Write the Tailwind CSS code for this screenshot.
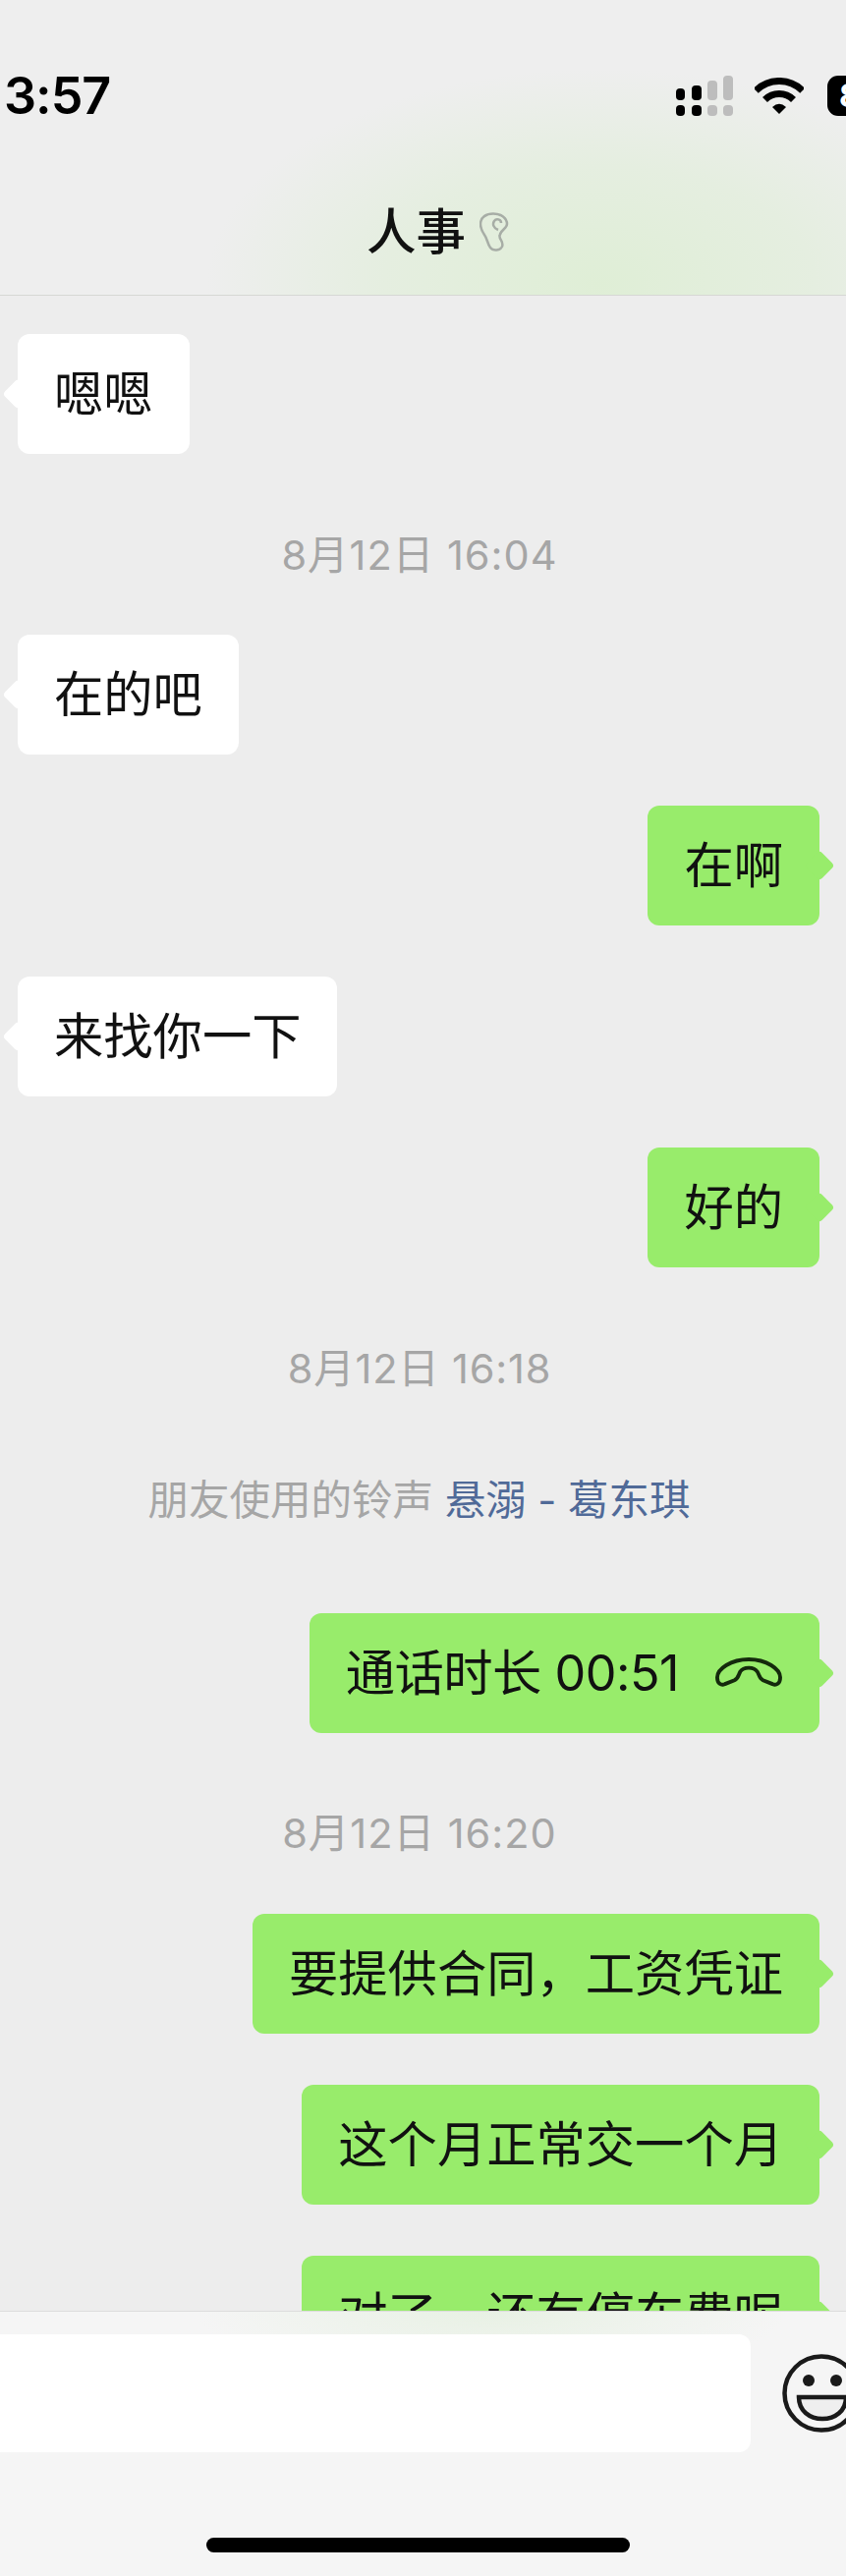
<!DOCTYPE html>
<html lang="zh-CN">
<head>
    <meta charset="UTF-8">
    <meta name="viewport" content="width=device-width, initial-scale=1.0">
    <title>人事</title>
    <script src="https://cdn.jsdelivr.net/npm/@tailwindcss/browser@4"></script>
</head>
<body class="bg-[#ededed] text-[#111111] font-['Inter','Noto_Sans_CJK_SC',sans-serif]">
<div class="relative w-[861px] h-[2622px] overflow-hidden flex flex-col">

    <!-- Header -->
    <header class="relative h-[301px] shrink-0 border-b border-[#d6d8d4] bg-[#eeeeee] overflow-hidden">
        <div class="absolute inset-0 bg-[radial-gradient(ellipse_400px_220px_at_610px_290px,#dfeed6_0%,#e5eee0_55%,#eeeeee_100%)]"></div>
        <div class="relative h-[200px] flex items-end">
            <!-- Status bar -->
            <div class="w-full h-[41px] mb-[82px] flex items-center justify-between">
                <span class="pl-[4px] text-[52px] font-semibold tracking-[-1px] text-black leading-none">3:57</span>
                <div class="flex items-center shrink-0 -mr-[30px]">
                    <svg width="58" height="41" viewBox="0 0 58 41" class="mr-[22px]">
                        <g fill="#000">
                            <rect x="0" y="13" width="9" height="12" rx="4"/>
                            <rect x="0" y="30" width="9" height="11" rx="4"/>
                            <rect x="16" y="10" width="10" height="15" rx="4"/>
                            <rect x="16" y="30" width="10" height="11" rx="4"/>
                        </g>
                        <g fill="#bdbdbd">
                            <rect x="32" y="5" width="10" height="20" rx="4"/>
                            <rect x="32" y="30" width="10" height="11" rx="4"/>
                            <rect x="48" y="0" width="10" height="25" rx="4"/>
                            <rect x="48" y="30" width="10" height="11" rx="4"/>
                        </g>
                    </svg>
                    <svg width="50" height="37" viewBox="0 0 50 37" class="mr-[24px]">
                        <g fill="none" stroke="#000" stroke-width="7">
                            <path d="M1.3 13.3A33.5 33.5 0 0 1 48.7 13.3"/>
                            <path d="M10.5 22.5A20.5 20.5 0 0 1 39.5 22.5"/>
                        </g>
                        <path d="M18 30Q25 23.500 32 30L25 37Z" fill="#000"/>
                    </svg>
                    <div class="w-[49px] h-[41px] rounded-[11px] bg-black text-white text-[32px] font-bold leading-[41px] pl-[12px]">80</div>
                </div>
            </div>
        </div>
        <!-- Title -->
        <div class="relative mt-[1px] flex items-center justify-center gap-[14px] pl-[30px]">
            <span class="text-[50.500px] leading-[70px] font-medium">人事</span>
            <svg width="30" height="41" viewBox="0 0 30 41" fill="none" stroke="#a7ada6" stroke-width="2.500">
                <path d="M1 12C1 5 7 1.500 14 1.500C22 1.500 28 6 28 12C28 17 21 18 20.500 24C20 28 25 30 23 35C21 39 14 40 11 36C8 32 8 27 5 23C3 20 1 17 1 12Z"/>
                <path d="M19 18C14 16 13 12 15 9C17 6 22 7 22 11"/>
            </svg>
        </div>
    </header>

    <!-- Chat -->
    <main class="flex-1 min-h-0 overflow-hidden bg-[#ededed] pt-[39px] pl-[18px] pr-[27px] flex flex-col items-start">
        <div class="relative h-[122px] shrink-0 px-[37px] flex items-center rounded-[12px] bg-white text-[50.300px]">
            <i class="absolute -left-[11px] top-[50px] w-[22px] h-[22px] rotate-45 rounded-[4px] bg-white"></i>
            <span class="relative">嗯嗯</span>
        </div>

        <div class="self-stretch h-[60px] shrink-0 mt-[73px] mb-[51px] flex items-center justify-center pl-[2px] text-[41.500px] tracking-[1px] text-[#a6a6a6]">8月12日 16:04</div>

        <div class="relative h-[122px] shrink-0 px-[37px] flex items-center rounded-[12px] bg-white text-[50.300px]">
            <i class="absolute -left-[11px] top-[50px] w-[22px] h-[22px] rotate-45 rounded-[4px] bg-white"></i>
            <span class="relative">在的吧</span>
        </div>

        <div class="relative self-end mt-[52px] h-[122px] shrink-0 px-[37px] flex items-center rounded-[12px] bg-[#98ec6b] text-[50.300px]">
            <i class="absolute -right-[11px] top-[50px] w-[22px] h-[22px] rotate-45 rounded-[4px] bg-[#98ec6b]"></i>
            <span class="relative">在啊</span>
        </div>

        <div class="relative mt-[52px] h-[122px] shrink-0 px-[37px] flex items-center rounded-[12px] bg-white text-[50.300px]">
            <i class="absolute -left-[11px] top-[50px] w-[22px] h-[22px] rotate-45 rounded-[4px] bg-white"></i>
            <span class="relative">来找你一下</span>
        </div>

        <div class="relative self-end mt-[52px] h-[122px] shrink-0 px-[37px] flex items-center rounded-[12px] bg-[#98ec6b] text-[50.300px]">
            <i class="absolute -right-[11px] top-[50px] w-[22px] h-[22px] rotate-45 rounded-[4px] bg-[#98ec6b]"></i>
            <span class="relative">好的</span>
        </div>

        <div class="self-stretch h-[60px] shrink-0 mt-[73px] flex items-center justify-center pl-[2px] text-[41.500px] tracking-[0.800px] text-[#a6a6a6]">8月12日 16:18</div>

        <div class="self-stretch h-[60px] shrink-0 mt-[74px] mb-[85px] flex items-center justify-center pl-[1px] text-[41.500px] text-[#a6a6a6]">
            <span>朋友使用的铃声&nbsp;<span class="text-[#506a98]">悬溺 - 葛东琪</span></span>
        </div>

        <div class="relative self-end h-[122px] shrink-0 pl-[37px] pr-[37px] flex items-center rounded-[12px] bg-[#98ec6b] text-[50.300px]">
            <i class="absolute -right-[11px] top-[50px] w-[22px] h-[22px] rotate-45 rounded-[4px] bg-[#98ec6b]"></i>
            <span class="relative tracking-[-0.500px]">通话时长 00:51</span>
            <svg width="70" height="31" viewBox="0 0 72 32" fill="none" stroke="#142a0c" stroke-width="4" class="relative ml-[36px] -mt-[2px]">
                <path d="M3 22C2 12 18 2 36 2C54 2 70 12 69 22C69 27 65 30 61 28L51 24C47 22 47 18 45 15C43 12 39 11 36 11C32 11 29 12 27 15C25 19 25 22 21 24L11 28C7 30 3 27 3 22Z"/>
            </svg>
        </div>

        <div class="self-stretch h-[60px] shrink-0 mt-[72px] mb-[52px] flex items-center justify-center pl-[2px] text-[41.500px] tracking-[1px] text-[#a6a6a6]">8月12日 16:20</div>

        <div class="relative self-end h-[122px] shrink-0 px-[37px] flex items-center rounded-[12px] bg-[#98ec6b] text-[50.300px]">
            <i class="absolute -right-[11px] top-[50px] w-[22px] h-[22px] rotate-45 rounded-[4px] bg-[#98ec6b]"></i>
            <span class="relative">要提供合同，工资凭证</span>
        </div>

        <div class="relative self-end mt-[52px] h-[122px] shrink-0 px-[37px] flex items-center rounded-[12px] bg-[#98ec6b] text-[50.300px]">
            <i class="absolute -right-[11px] top-[50px] w-[22px] h-[22px] rotate-45 rounded-[4px] bg-[#98ec6b]"></i>
            <span class="relative">这个月正常交一个月</span>
        </div>

        <div class="relative self-end mt-[52px] h-[122px] shrink-0 px-[37px] flex items-center rounded-[12px] bg-[#98ec6b] text-[50.300px]">
            <i class="absolute -right-[11px] top-[50px] w-[22px] h-[22px] rotate-45 rounded-[4px] bg-[#98ec6b]"></i>
            <span class="relative">对了，还有停车费呢</span>
        </div>
    </main>

    <!-- Input bar -->
    <footer class="relative h-[270px] shrink-0 border-t border-[#dcdcdc] bg-[#f5f5f5] overflow-hidden">
        <div class="absolute inset-0 bg-[radial-gradient(ellipse_300px_70px_at_500px_0px,#e8f1e4_0%,#f5f5f5_100%)]"></div>
        <div class="relative pt-[23px] flex items-start">
            <div class="w-[764px] h-[120px] shrink-0 rounded-r-[12px] bg-white"></div>
            <svg width="80" height="80" viewBox="0 0 80 80" class="shrink-0 ml-[32px] mt-[20px]" fill="none" stroke="#1a1a1a" stroke-width="4.500">
                <circle cx="40" cy="40" r="37.500"/>
                <circle cx="27" cy="27" r="6" fill="#1a1a1a" stroke="none"/>
                <circle cx="55" cy="27" r="6" fill="#1a1a1a" stroke="none"/>
                <path d="M17 44H65C65 58 54 66 41 66C28 66 17 58 17 44Z" fill="#efefef"/>
            </svg>
        </div>
        <div class="absolute left-[210px] top-[230px] w-[431px] h-[15px] rounded-full bg-black"></div>
    </footer>
</div>
</body>
</html>
